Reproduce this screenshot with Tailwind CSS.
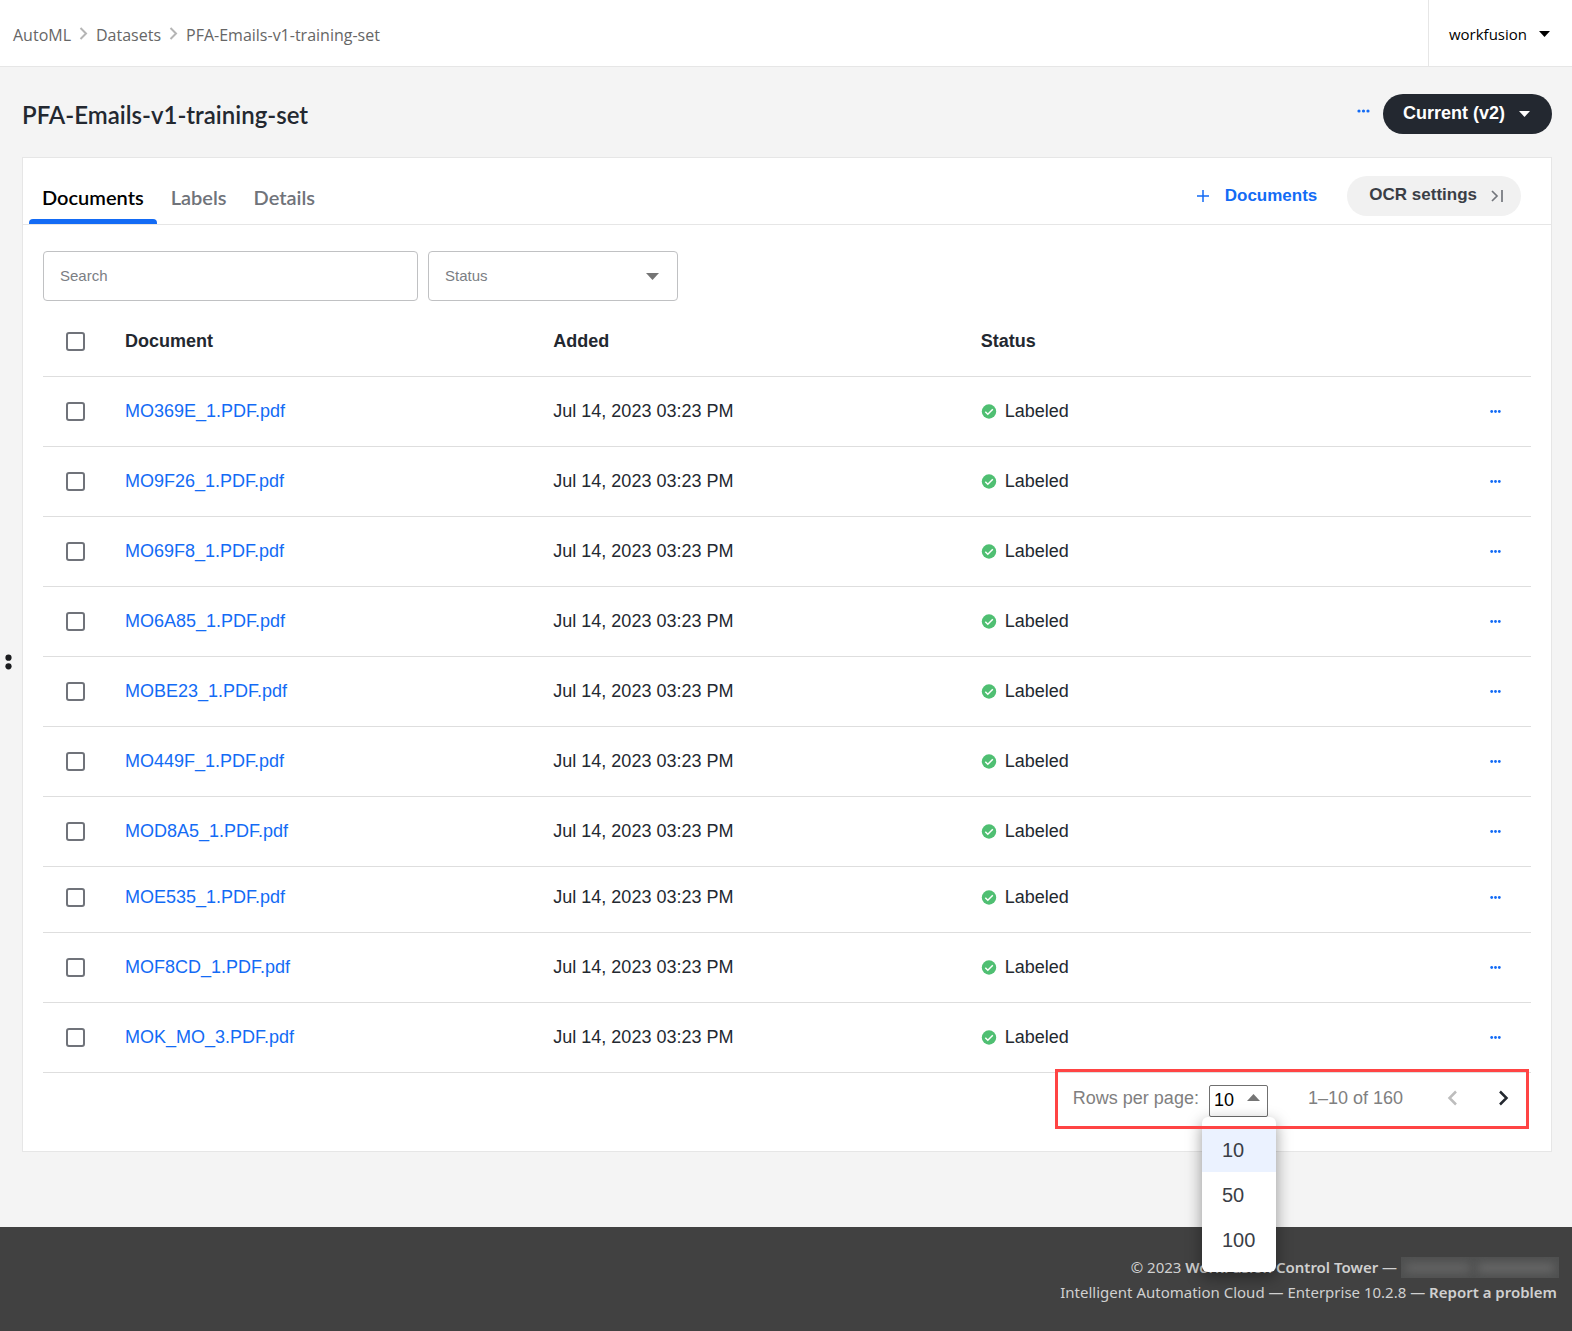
<!DOCTYPE html>
<html lang="en">
<head>
    <meta charset="UTF-8">
    <meta name="viewport" content="width=device-width, initial-scale=1.0">
    <title>PFA-Emails-v1-training-set</title>
    <script src="https://cdn.jsdelivr.net/npm/@tailwindcss/browser@4"></script>
</head>
<body class="relative min-h-screen flex flex-col bg-[#f4f4f4] text-[#232830] text-lg leading-6 font-['Liberation_Sans',Arial,sans-serif]">
    <header class="flex justify-between h-[67px] bg-white border-b border-[#e6e6e6] font-['Open_Sans','Noto_Sans',sans-serif]">
        <nav aria-label="Breadcrumb" class="flex items-center gap-2 pl-[13px] pt-1 text-base text-[#666]">
            <a href="#">AutoML</a>
            <svg class="w-[9px] h-[13px] mb-1" viewBox="0 0 9 13" fill="none" stroke="#b5b5b5" stroke-width="2"><path d="M1.5 1l5.5 5.5L1.5 12"/></svg>
            <a href="#">Datasets</a>
            <svg class="w-[9px] h-[13px] mb-1" viewBox="0 0 9 13" fill="none" stroke="#b5b5b5" stroke-width="2"><path d="M1.5 1l5.5 5.5L1.5 12"/></svg>
            <span>PFA-Emails-v1-training-set</span>
        </nav>
        <button class="flex items-center gap-3 pl-5 pr-[22px] pt-0.5 border-l border-[#e6e6e6] text-[15px] text-black">
            workfusion
            <svg class="w-[11px] h-[6px]" viewBox="0 0 11 6"><path d="M0 0h11L5.500 6z"/></svg>
        </button>
    </header>

    <!-- Resize handle -->
    <svg class="absolute left-[5px] top-[654px] w-[7px] h-4" viewBox="0 0 7 16" fill="#1b1c1f"><circle cx="3.500" cy="3.700" r="3.100"/><circle cx="3.500" cy="12.300" r="3.100"/></svg>

    <main class="flex-1 pl-[22px] pr-5 pb-[75px]">
        <div class="flex items-center justify-between h-[90px] pt-[4px]">
            <h1 class="pt-0.5 text-2xl font-semibold font-['Lato',sans-serif]">PFA-Emails-v1-training-set</h1>
            <div class="flex items-center gap-[13px]">
                <button aria-label="More actions" class="pb-1.5">
                    <svg class="w-[13px] h-1" viewBox="0 0 13 4" fill="#136bf5"><circle cx="2" cy="2" r="1.600"/><circle cx="6.500" cy="2" r="1.600"/><circle cx="11" cy="2" r="1.600"/></svg>
                </button>
                <button class="flex items-center gap-3.5 h-10 pl-5 pr-[22px] rounded-full bg-[#232830] text-white font-bold">
                    <span class="pb-0.5">Current (v2)</span>
                    <svg class="w-[11px] h-[6px]" viewBox="0 0 11 6" fill="#fff"><path d="M0 0h11L5.500 6z"/></svg>
                </button>
            </div>
        </div>

        <section class="bg-white border border-[#e6e6e6]">
            <!-- Tabs -->
            <div class="flex items-end justify-between h-[67px] pl-1.5 pr-[30px] border-b border-[#e6e6e6]">
                <div role="tablist" class="flex text-xl font-semibold text-[#70737a] font-['Lato',sans-serif]">
                    <button role="tab" aria-selected="true" class="relative px-[13px] pb-[13px] text-black">
                        Documents
                        <span class="absolute left-0 right-0 bottom-0 h-[5px] rounded-t bg-[#136bf5]"></span>
                    </button>
                    <button role="tab" class="px-[14px] pb-[13px]">Labels</button>
                    <button role="tab" class="px-[13px] pb-[13px]">Details</button>
                </div>
                <div class="flex items-center gap-[30px] pb-2 text-[17px] font-bold">
                    <button class="flex items-center gap-4 text-[#136bf5]">
                        <svg class="w-3 h-3" viewBox="0 0 12 12" stroke="#136bf5" stroke-width="1.500"><path d="M6 0v12M0 6h12"/></svg>
                        Documents
                    </button>
                    <button class="flex items-center gap-3.5 h-10 pl-[22px] pr-[18px] rounded-full bg-[#f1f1f1] text-[#3a3e46]">
                        <span class="pb-0.5">OCR settings</span>
                        <svg class="w-3 h-3" viewBox="0 0 12 12" fill="none" stroke="#73767c" stroke-width="1.700"><path d="M1 1l5 5-5 5M11 0v12"/></svg>
                    </button>
                </div>
            </div>

            <div class="px-5 pt-[26px] pb-[22px]">
                <!-- Filters -->
                <div class="flex gap-2.5 text-[15px] text-[#7b7e84]">
                    <input type="text" aria-label="Search" placeholder="Search" class="w-[375px] h-[50px] px-4 pb-0.5 border border-[#c0c1c3] rounded placeholder:text-[#7b7e84]">
                    <div class="relative w-[250px]">
                        <select aria-label="Status" class="appearance-none w-full h-[50px] px-4 border border-[#c0c1c3] rounded">
                            <option>Status</option>
                            <option>Labeled</option>
                        </select>
                        <svg class="absolute right-[19px] top-[22px] w-[13px] h-[7px] pointer-events-none" viewBox="0 0 13 7" fill="#757575"><path d="M0 0h13L6.500 7z"/></svg>
                    </div>
                </div>

                <!-- Documents -->
                <table class="w-full mt-1.5 table-fixed text-left">
                    <thead>
                        <tr class="border-b border-[#dedede]">
                            <th class="w-[62px] pl-[23px] pt-[22px] pb-[23px]">
                                <input type="checkbox" aria-label="Select all" class="block appearance-none w-[19px] h-[19px] border-2 border-[#70737a] rounded-[3px]">
                            </th>
                            <th class="pl-5 pt-[22px] pb-[23px]">Document</th>
                            <th class="pl-5 pt-[22px] pb-[23px]">Added</th>
                            <th class="pl-[19px] pt-[22px] pb-[23px]">Status</th>
                            <th class="w-[141px]"></th>
                        </tr>
                    </thead>
                    <tbody id="documentList"></tbody>
                </table>

                <!-- Pagination -->
                <div class="relative flex items-center w-fit h-[60px] -mt-1 ml-auto mr-0.5 pl-[18px] pr-5 pb-[3px] text-[#808080]">
                    <label for="rowsPerPage">Rows per page:</label>
                    <div class="relative w-[59px] ml-2.5 mt-1.5">
                        <select id="rowsPerPage" class="block appearance-none w-full h-8 pl-1 pb-0.5 bg-white border border-[#707070] rounded-xs text-black">
                            <option>10</option>
                            <option>50</option>
                            <option>100</option>
                        </select>
                        <svg class="absolute right-2 top-[9px] w-[13px] h-[7px] pointer-events-none" viewBox="0 0 13 7" fill="#757575"><path d="M0 7h13L6.500 0z"/></svg>
                        <ul role="listbox" aria-label="Rows per page" class="absolute z-10 -left-[7px] top-8 w-[74px] py-2.5 bg-white rounded-md shadow-[0_5px_16px_rgba(0,0,0,0.4)] text-xl text-[#3a3e46]">
                            <li role="option" aria-selected="true" class="flex items-center h-[45px] pt-0.5 pl-5 bg-[#ebf2ff]">10</li>
                            <li role="option" class="flex items-center h-[45px] pt-0.5 pl-5">50</li>
                            <li role="option" class="flex items-center h-[45px] pt-0.5 pl-5">100</li>
                        </ul>
                    </div>
                    <span class="ml-10">1–10 of 160</span>
                    <button aria-label="Previous page" class="ml-11" disabled>
                        <svg class="w-[11px] h-4" viewBox="0 0 11 16" fill="none" stroke="#bdbdbd" stroke-width="2.500"><path d="M9 1.500L2.500 8 9 14.500"/></svg>
                    </button>
                    <button aria-label="Next page" class="ml-10">
                        <svg class="w-[11px] h-4" viewBox="0 0 11 16" fill="none" stroke="#232830" stroke-width="2.500"><path d="M2 1.500L8.500 8 2 14.500"/></svg>
                    </button>
                    <div class="absolute inset-0 z-20 border-3 border-[#ff4444] pointer-events-none"></div>
                </div>
            </div>
        </section>
    </main>

    <footer class="h-[104px] pt-7 pr-[15px] bg-[#414141] text-[#d0d0d0] text-[15px] leading-[25px] text-right font-['Noto_Sans','Open_Sans',sans-serif]">
        <p class="flex justify-end">
            <span>© 2023 <b class="font-semibold">WorkFusion Control Tower</b> —&nbsp;</span>
            <span class="flex items-center justify-center w-[158px] h-[21px] mt-0.5 -mr-0.5 bg-[#4f5050] overflow-hidden">
                <span class="w-[64px] h-2 mr-2 bg-[#686868] blur-[5px]"></span>
                <span class="w-[76px] h-2 bg-[#6c6c6c] blur-[5px]"></span>
            </span>
        </p>
        <p>Intelligent Automation Cloud — Enterprise 10.2.8 — <a href="#" class="font-semibold">Report a problem</a></p>
    </footer>

    <script>
        const documents = [
            { name: 'MO369E_1.PDF.pdf' },
            { name: 'MO9F26_1.PDF.pdf' },
            { name: 'MO69F8_1.PDF.pdf' },
            { name: 'MO6A85_1.PDF.pdf' },
            { name: 'MOBE23_1.PDF.pdf' },
            { name: 'MO449F_1.PDF.pdf' },
            { name: 'MOD8A5_1.PDF.pdf' },
            { name: 'MOE535_1.PDF.pdf', compact: true },
            { name: 'MOF8CD_1.PDF.pdf' },
            { name: 'MOK_MO_3.PDF.pdf' }
        ];

        document.getElementById('documentList').innerHTML = documents.map(doc => {
            const pad = doc.compact ? 'pt-[18px] pb-[23px]' : 'pt-[22px] pb-[23px]';
            return `
                <tr class="border-b border-[#dedede]">
                    <td class="pl-[23px] ${pad}">
                        <input type="checkbox" aria-label="Select ${doc.name}" class="block appearance-none w-[19px] h-[19px] border-2 border-[#70737a] rounded-[3px]">
                    </td>
                    <td class="pl-5 ${pad}"><a href="#" class="text-[#136bf5]">${doc.name}</a></td>
                    <td class="pl-5 ${pad}">Jul 14, 2023 03:23 PM</td>
                    <td class="pl-[19px] ${pad}">
                        <div class="flex items-center gap-2">
                            <svg class="w-4 h-4" viewBox="0 0 16 16"><circle cx="8" cy="8.500" r="7.200" fill="#4fbf72"/><path d="M4.300 8.800l2.500 2.500 5-5" fill="none" stroke="#fff" stroke-width="1.500"/></svg>
                            Labeled
                        </div>
                    </td>
                    <td class="pr-[30px] ${pad}">
                        <button aria-label="Actions for ${doc.name}" class="block ml-auto py-2.5">
                            <svg class="w-[11px] h-[4px]" viewBox="0 0 11 4" fill="#136bf5"><circle cx="1.700" cy="2.500" r="1.400"/><circle cx="5.500" cy="2.500" r="1.400"/><circle cx="9.300" cy="2.500" r="1.400"/></svg>
                        </button>
                    </td>
                </tr>
            `;
        }).join('');
    </script>
</body>
</html>
